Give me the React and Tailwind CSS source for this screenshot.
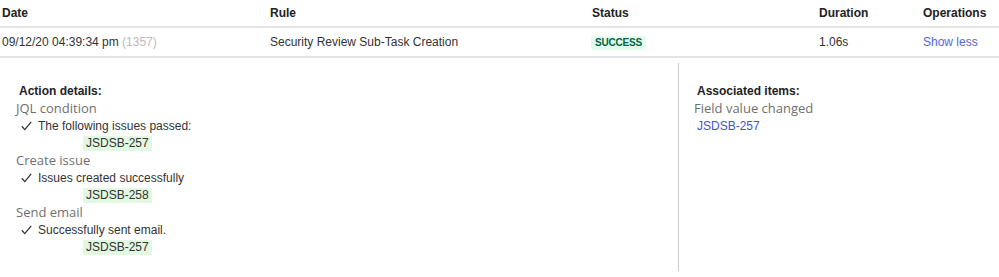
import React from "react";

const Check = () => (
  <svg width="11" height="10" viewBox="0 0 11 10" className="shrink-0">
    <polyline points="0.8,5.2 3.8,8.6 10.2,0.8" fill="none" stroke="#333" strokeWidth="1.3" />
  </svg>
);

const Tag = ({ children }) => (
  <div className="h-[17.33px] flex items-center">
    <span className="ml-[67px] bg-[#e2f8e2] px-[3px] h-[15px] leading-[15px] text-[12px] text-[#333]">{children}</span>
  </div>
);

const Group = ({ title, line, tag }) => (
  <div>
    <div className="h-[17.33px] leading-[17.33px] text-[13px] text-[#707070] [font-family:'Open_Sans',sans-serif]">{title}</div>
    <div className="h-[17.33px] flex items-center gap-[6px] ml-[5px] text-[12px] text-[#333]">
      <Check />
      <span>{line}</span>
    </div>
    <Tag>{tag}</Tag>
  </div>
);

export default function App() {
  return (
    <div className="w-[999px] h-[277px] bg-white [font-family:'Liberation_Sans',Arial,sans-serif] text-[#333] overflow-hidden">
      <div className="grid grid-cols-[268px_322px_227px_104px_1fr] h-[28px] items-center text-[12px] font-bold text-[#222] border-b-2 border-[#e4e4e4] pl-[2px]">
        <div>Date</div>
        <div>Rule</div>
        <div>Status</div>
        <div>Duration</div>
        <div>Operations</div>
      </div>
      <div className="grid grid-cols-[268px_322px_227px_104px_1fr] h-[30px] items-center text-[12px] text-[#333] border-b-2 border-[#e4e4e4] pl-[2px]">
        <div>
          09/12/20 04:39:34 pm <span className="text-[#bbbbbb]">(1357)</span>
        </div>
        <div>Security Review Sub-Task Creation</div>
        <div>
          <span className="inline-flex items-center h-[14px] px-[4px] -ml-[1px] rounded-[3px] bg-[#e3fcef] text-[#006644] text-[10px] font-bold tracking-[-0.2px]">
            SUCCESS
          </span>
        </div>
        <div>1.06s</div>
        <div className="text-[#5566d8]">Show less</div>
      </div>
      <div className="flex mt-[5px] h-[208px]">
        <div className="w-[678px] pl-[16px] pt-[20px]">
          <div className="h-[17.33px] leading-[17.33px] ml-[3px] text-[12px] font-bold text-[#222]">Action details:</div>
          <Group title="JQL condition" line="The following issues passed:" tag="JSDSB-257" />
          <Group title="Create issue" line="Issues created successfully" tag="JSDSB-258" />
          <Group title="Send email" line="Successfully sent email." tag="JSDSB-257" />
        </div>
        <div className="flex-1 border-l border-[#cccccc] pl-[15px] pt-[20px]">
          <div className="h-[17.33px] leading-[17.33px] ml-[3px] text-[12px] font-bold text-[#222]">Associated items:</div>
          <div className="h-[17.33px] leading-[17.33px] text-[13px] text-[#707070] [font-family:'Open_Sans',sans-serif]">Field value changed</div>
          <div className="h-[17.33px] leading-[17.33px] ml-[3px] text-[12px] text-[#4455cc]">JSDSB-257</div>
        </div>
      </div>
    </div>
  );
}
